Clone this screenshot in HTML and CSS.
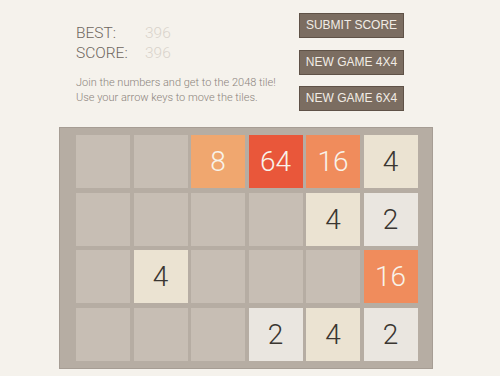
FILE: index.html
```html
<!DOCTYPE html>
<html>
<head>
<meta charset="utf-8">
<link rel="stylesheet" href="styles.css">
</head>
<body>
<div class="top">
  <div class="info">
    <div class="stat"><span class="label">BEST:</span><span class="value">396</span></div>
    <div class="stat"><span class="label">SCORE:</span><span class="value">396</span></div>
    <p class="desc">Join the numbers and get to the 2048 tile!<br>Use your arrow keys to move the tiles.</p>
  </div>
  <div class="buttons">
    <div class="btn">SUBMIT SCORE</div>
    <div class="btn">NEW GAME 4X4</div>
    <div class="btn">NEW GAME 6X4</div>
  </div>
</div>
<div class="board">
  <div class="tile"></div><div class="tile"></div><div class="tile t8">8</div><div class="tile t64">64</div><div class="tile t16">16</div><div class="tile t4">4</div>
  <div class="tile"></div><div class="tile"></div><div class="tile"></div><div class="tile"></div><div class="tile t4">4</div><div class="tile t2">2</div>
  <div class="tile"></div><div class="tile t4">4</div><div class="tile"></div><div class="tile"></div><div class="tile"></div><div class="tile t16">16</div>
  <div class="tile"></div><div class="tile"></div><div class="tile"></div><div class="tile t2">2</div><div class="tile t4">4</div><div class="tile t2">2</div>
</div>
</body>
</html>
```
FILE: styles.css
```css
html, body {
  margin: 0;
  padding: 0;
  background: #f5f2ec;
  font-family: "Roboto", "Liberation Sans", sans-serif;
}
.top {
  display: flex;
  padding-top: 13px;
}
.info {
  margin-left: 76px;
  width: 223px;
  padding-top: 10px;
}
.stat {
  font-size: 15.5px;
  font-weight: 300;
  line-height: 20px;
  color: #6e665e;
}
.label {
  display: inline-block;
  width: 69px;
}
.value {
  color: #d9d3cb;
}
.desc {
  margin: 12px 0 0 0;
  font-size: 11px;
  line-height: 15px;
  color: #8c847c;
  font-weight: 300;
}
.buttons {
  display: flex;
  flex-direction: column;
  gap: 11.5px;
  width: 105px;
}
.btn {
  height: 23px;
  line-height: 23px;
  text-align: center;
  background: #7b6d61;
  border: 1px solid #5f5247;
  color: #f1ece5;
  font-family: "Liberation Sans", sans-serif;
  font-size: 12px;
  white-space: nowrap;
}
.board {
  margin: 16px 0 0 59px;
  width: 341.5px;
  padding: 7px 14px 7px 16px;
  background: #b6ada3;
  border: 1px solid #a69d94;
  display: grid;
  grid-template-columns: repeat(6, 54px);
  grid-template-rows: repeat(4, 53px);
  column-gap: 3.5px;
  row-gap: 4.5px;
}
.tile {
  background: #c7beb4;
  display: flex;
  align-items: center;
  justify-content: center;
  font-size: 28px;
  font-weight: 300;
  color: #f8f3ea;
}
.t2 { background: #eae6e0; color: #3a3631; }
.t4 { background: #ebe3d2; color: #3a3631; }
.t8 { background: #f0a76f; }
.t16 { background: #f08c5c; }
.t64 { background: #e9573a; }
```
